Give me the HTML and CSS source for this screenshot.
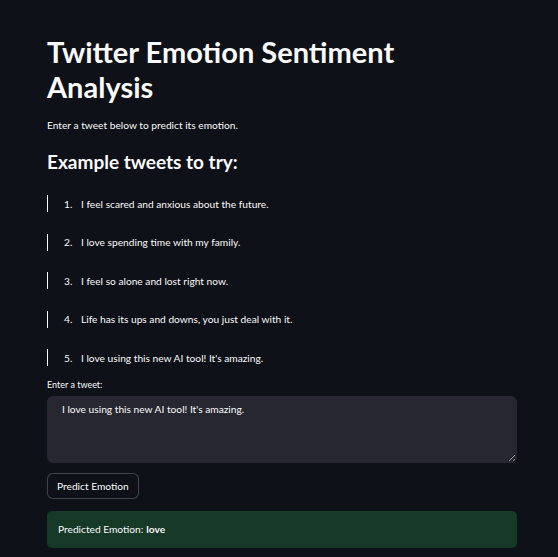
FILE: index.html
```html
<!DOCTYPE html>
<html>
<head>
<meta charset="utf-8">
<link rel="stylesheet" href="styles.css">
</head>
<body>
<main class="main">
  <h1 class="title">Twitter Emotion Sentiment Analysis</h1>
  <p class="intro">Enter a tweet below to predict its emotion.</p>
  <h3 class="subtitle">Example tweets to try:</h3>
  <blockquote class="quote"><span class="num">1.</span><span>I feel scared and anxious about the future.</span></blockquote>
  <blockquote class="quote"><span class="num">2.</span><span>I love spending time with my family.</span></blockquote>
  <blockquote class="quote"><span class="num">3.</span><span>I feel so alone and lost right now.</span></blockquote>
  <blockquote class="quote"><span class="num">4.</span><span>Life has its ups and downs, you just deal with it.</span></blockquote>
  <blockquote class="quote"><span class="num">5.</span><span>I love using this new AI tool! It's amazing.</span></blockquote>
  <label class="label" for="tweet">Enter a tweet:</label>
  <textarea id="tweet" class="area">I love using this new AI tool! It's amazing.</textarea>
  <button class="btn">Predict Emotion</button>
  <div class="success">Predicted Emotion: <b>love</b></div>
</main>
</body>
</html>
```
FILE: styles.css
```css
html, body {
  margin: 0;
  padding: 0;
  background: #0e1117;
  color: #fafafa;
  font-family: Lato, "Noto Sans", sans-serif;
}
.main {
  width: 470px;
  padding: 34px 0 0 47px;
  display: flex;
  flex-direction: column;
  align-items: flex-start;
}
.title {
  margin: 0;
  max-width: 420px;
  font-size: 29px;
  line-height: 35px;
  font-weight: 700;
}
.intro {
  margin: 13px 0 0;
  font-size: 10.2px;
  line-height: 16px;
}
.subtitle {
  margin: 16px 0 20px;
  font-size: 19px;
  line-height: 26px;
  font-weight: 700;
}
.quote {
  margin: 0 0 21.5px;
  border-left: 1px solid #fafafa;
  padding-left: 16px;
  height: 17px;
  display: flex;
  align-items: center;
  font-size: 10.2px;
}
.num {
  width: 17px;
}
.label {
  margin-top: -10px;
  font-size: 9px;
  line-height: 14px;
}
.area {
  margin-top: 4px;
  box-sizing: border-box;
  width: 470px;
  height: 67px;
  background: #262730;
  border: 1px solid #262730;
  border-radius: 6px;
  color: #fafafa;
  font-family: inherit;
  font-size: 10.2px;
  padding: 6px 14px;
  resize: vertical;
}
.btn {
  margin-top: 10px;
  height: 26px;
  padding: 0 9px;
  background: #0e1117;
  color: #fafafa;
  border: 1px solid rgba(250,250,250,0.22);
  border-radius: 6px;
  font-family: inherit;
  font-size: 10.2px;
}
.success {
  margin-top: 12px;
  box-sizing: border-box;
  width: 470px;
  height: 37px;
  background: #173928;
  border-radius: 5px;
  padding: 0 11px;
  display: flex;
  align-items: center;
  font-size: 10.2px;
}
.success b {
  margin-left: 3px;
}
```
